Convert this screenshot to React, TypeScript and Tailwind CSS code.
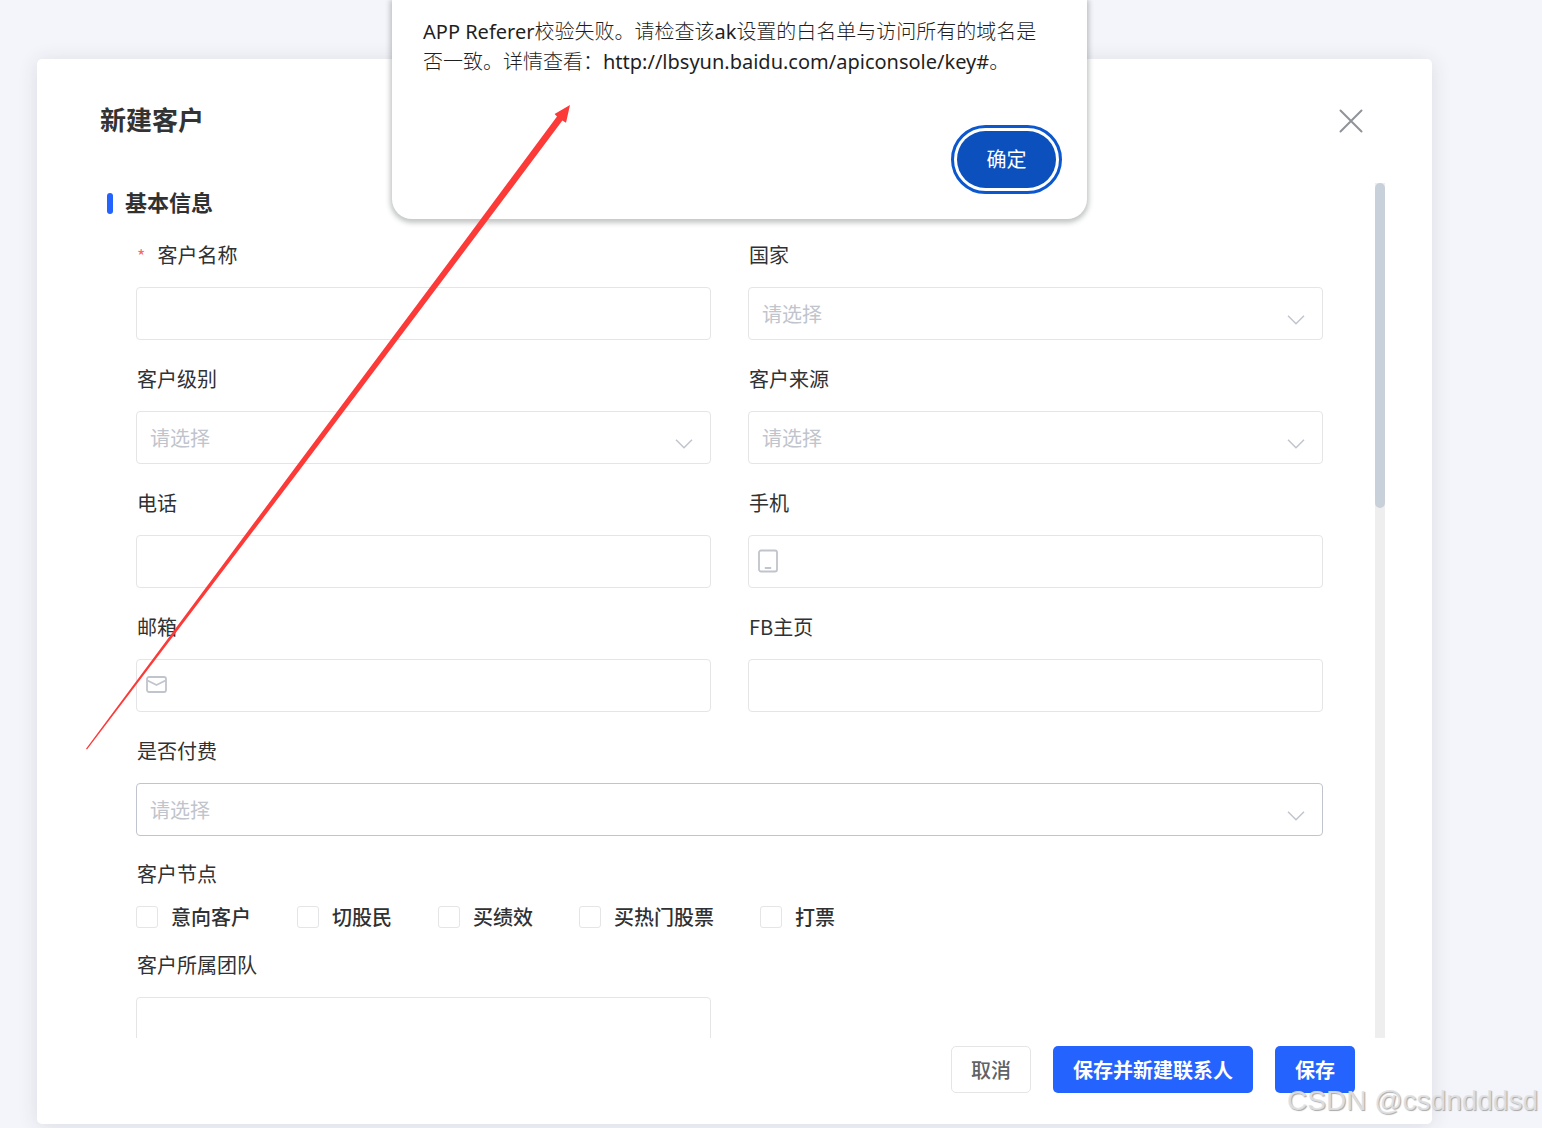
import { useState } from 'react';
import type { ReactNode } from 'react';
import clsx from 'clsx';

interface FieldConfig {
  id: string;
  label: string;
  kind: 'text' | 'select';
  type?: string;
  required?: boolean;
  wide?: boolean;
  icon?: ReactNode;
}

const PhoneIcon = () => (
  <svg width="20" height="24" viewBox="0 0 20 24" fill="none" stroke="#c0c4cc" strokeWidth="1.8" strokeLinecap="round">
    <rect x="1" y="1.5" width="18" height="21" rx="2" />
    <path d="M7.5 19h5" />
  </svg>
);

const MailIcon = () => (
  <svg width="21" height="17" viewBox="0 0 21 17" fill="none" stroke="#c0c4cc" strokeWidth="1.8" strokeLinejoin="round">
    <rect x="1" y="1" width="19" height="15" rx="2" />
    <path d="M1.5 4.5 10.5 9l9-4.5" />
  </svg>
);

const ChevronIcon = () => (
  <svg width="18" height="10" viewBox="0 0 18 10" fill="none" stroke="#c0c4cc" strokeWidth="1.5">
    <path d="M1 .8 9 8.8l8-8" />
  </svg>
);

const fields: FieldConfig[] = [
  { id: 'name', label: '客户名称', kind: 'text', required: true },
  { id: 'country', label: '国家', kind: 'select' },
  { id: 'level', label: '客户级别', kind: 'select' },
  { id: 'source', label: '客户来源', kind: 'select' },
  { id: 'tel', label: '电话', kind: 'text', type: 'tel' },
  { id: 'mobile', label: '手机', kind: 'text', type: 'tel', icon: <PhoneIcon /> },
  { id: 'email', label: '邮箱', kind: 'text', type: 'email', icon: <MailIcon /> },
  { id: 'fb', label: 'FB主页', kind: 'text' },
  { id: 'paid', label: '是否付费', kind: 'select', wide: true },
];

const nodes = ['意向客户', '切股民', '买绩效', '买热门股票', '打票'];

const labelClass = 'mb-4 flex h-8 items-center pl-px text-[20px] leading-8 text-[#303133]';
const inputClass = 'block h-[53px] w-full rounded-[4px] border bg-white px-[13px] text-[20px] outline-none';

function Field({ field }: { field: FieldConfig }) {
  return (
    <div className={clsx(field.wide && 'col-span-2')}>
      <label htmlFor={field.id} className={labelClass}>
        {field.required && <span className="mr-3 text-[18px] text-[#f56c6c]">*</span>}
        {field.label}
      </label>
      <div className="relative">
        {field.kind === 'select' ? (
          <>
            <select
              id={field.id}
              defaultValue=""
              className={clsx(
                inputClass,
                'appearance-none text-[#c0c4cc]',
                field.wide ? 'border-[#c0c4cc]' : 'border-[#e4e5e7]'
              )}
            >
              <option value="">请选择</option>
            </select>
            <span className="pointer-events-none absolute top-7 right-[18px]">
              <ChevronIcon />
            </span>
          </>
        ) : (
          <>
            <input
              id={field.id}
              type={field.type ?? 'text'}
              className={clsx(inputClass, 'border-[#e4e5e7] text-[#303133]', field.icon && 'pl-11')}
            />
            {field.icon && (
              <span className="pointer-events-none absolute inset-y-0 left-2.5 flex items-center pb-0.5">
                {field.icon}
              </span>
            )}
          </>
        )}
      </div>
    </div>
  );
}

function RefererAlert() {
  return (
    <div
      role="alertdialog"
      aria-label="提示"
      className="absolute top-0 left-[392px] h-[219px] w-[695px] rounded-b-[20px] bg-white px-[31px] pt-[17px] font-['Noto_Sans','Noto_Sans_CJK_SC',sans-serif] shadow-[0_2px_5px_2px_rgba(60,70,70,0.3)]"
    >
      <p className="text-[20px] leading-[30px] font-light whitespace-nowrap text-[#1f1f1f]">
        <span className="font-normal">APP Referer</span>校验失败。请检查该<span className="font-normal">ak</span>
        设置的白名单与访问所有的域名是
        <br />
        否一致。详情查看：<span className="font-normal">http://lbsyun.baidu.com/apiconsole/key#</span>。
      </p>
      <div className="mt-[54px] flex justify-end">
        <button
          type="button"
          className="h-[57px] w-[99px] rounded-full bg-[#0b50bc] text-[20px] text-white outline-3 outline-offset-3 outline-[#0b57d0]"
        >
          确定
        </button>
      </div>
    </div>
  );
}

export default function App() {
  const [checked, setChecked] = useState<string[]>([]);

  const toggleNode = (node: string) => {
    setChecked(prev => (prev.includes(node) ? prev.filter(item => item !== node) : [...prev, node]));
  };

  return (
    <div className="relative flex h-screen flex-col overflow-hidden bg-[#f4f5fa] pt-[59px] pr-[110px] pb-1 pl-[37px] font-['Noto_Sans_CJK_SC',sans-serif]">
      <div className="flex min-h-0 flex-1 flex-col rounded-[5px] bg-white shadow-[0_2px_20px_rgba(40,50,70,0.12)]">
        <header className="flex h-[124px] shrink-0 items-center justify-between pr-[69px] pl-[63px]">
          <h1 className="pb-1.5 text-[26px] font-bold text-[#333333]">新建客户</h1>
          <button type="button" aria-label="关闭">
            <svg width="24" height="24" viewBox="0 0 24 24" fill="none" stroke="#909399" strokeWidth="2" strokeLinecap="round">
              <path d="m1.5 1.5 21 21M22.5 1.5l-21 21" />
            </svg>
          </button>
        </header>

        <div className="flex min-h-0 flex-1 pr-[47px] pl-[70px]">
          <form className="min-w-0 flex-1 overflow-y-auto [scrollbar-width:none]">
            <h2 className="mb-4 flex h-10 items-center gap-3 text-[22px] font-bold text-[#303133]">
              <span className="h-[21px] w-1.5 rounded-full bg-[#2463fe]" />
              <span className="pb-1">基本信息</span>
            </h2>
            <div className="pr-[52px] pl-[29px]">
              <div className="grid grid-cols-2 gap-x-[37px] gap-y-[23px]">
                {fields.map(field => (
                  <Field key={field.id} field={field} />
                ))}
              </div>

              <fieldset className="mt-[22px]">
                <legend className="flex h-8 items-center pl-px text-[20px] text-[#303133]">客户节点</legend>
                <div className="mt-4 flex gap-[46px]">
                  {nodes.map(node => (
                    <label
                      key={node}
                      className="flex h-[22px] items-center gap-[13px] text-[20px] font-medium text-[#303133]"
                    >
                      <input
                        type="checkbox"
                        checked={checked.includes(node)}
                        onChange={() => toggleNode(node)}
                        className="size-[22px] appearance-none rounded-[3px] border border-[#e4e5e7] bg-white checked:bg-[#2463fe]"
                      />
                      {node}
                    </label>
                  ))}
                </div>
              </fieldset>

              <div className="mt-[21px] grid grid-cols-2 gap-x-[37px]">
                <Field field={{ id: 'team', label: '客户所属团队', kind: 'text' }} />
              </div>
            </div>
          </form>
          <div className="w-2.5 bg-[#eeeeee]">
            <div className="h-[38%] rounded-full bg-[#c8d1d9]" />
          </div>
        </div>

        <footer className="flex shrink-0 justify-end gap-[22px] pt-2 pr-[77px] pb-[31px] text-[20px] font-bold">
          <button type="button" className="h-[47px] rounded-[5px] border border-[#e4e5e7] bg-white px-[19px] font-medium text-[#606266]">
            取消
          </button>
          <button type="button" className="h-[47px] rounded-[5px] bg-[#2463fe] px-5 text-white">
            保存并新建联系人
          </button>
          <button type="button" className="h-[47px] rounded-[5px] bg-[#2463fe] px-5 text-white">
            保存
          </button>
        </footer>
      </div>

      <RefererAlert />

      {/* Annotation arrow pointing at the alert text */}
      <svg
        className="pointer-events-none absolute top-[105px] left-[86px]"
        width="484"
        height="645"
        viewBox="86 105 484 645"
        fill="#fc3a38"
      >
        <path d="M570 105 566 122.8 562.4 120.6 473 239.8 300 469.5 87 749.5 86 748.8 296 466.6 465.5 239.8 557 116.4 554.6 114Z" />
      </svg>

      <p className="pointer-events-none absolute right-1 bottom-1 font-['Liberation_Sans',Arial,sans-serif] text-[28px] leading-[46px] whitespace-nowrap text-[#e2e2e4]/90 [text-shadow:1px_1px_1px_#a8a8a8]">
        CSDN @csdndddsd
      </p>
    </div>
  );
}
